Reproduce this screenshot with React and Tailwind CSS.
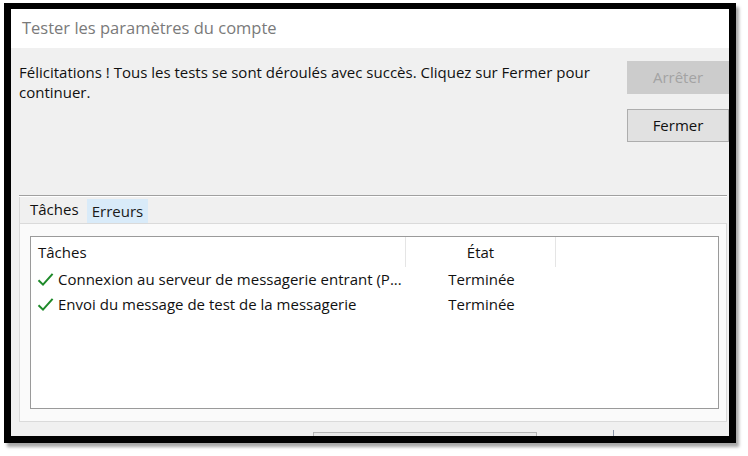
// Boîte de dialogue « Tester les paramètres du compte »

const font = { fontFamily: '"Open Sans", "Noto Sans", sans-serif' };

function Check() {
    return (
        <svg width="17" height="15" viewBox="0 0 17 15" className="shrink-0">
            <path d="M1.5 8.2 L6 12.6 L15.6 1.8" fill="none" stroke="#1e8a2a" strokeWidth="2" />
        </svg>
    );
}

const rows = [
    { label: 'Connexion au serveur de messagerie entrant (P...', state: 'Terminée' },
    { label: 'Envoi du message de test de la messagerie', state: 'Terminée' },
];

export default function App() {
    return (
        <div className="w-[748px] h-[456px] bg-white overflow-hidden" style={font}>
            {/* ── Cadre noir + ombre ───────────────────────── */}
            <div className="ml-[4px] mt-[3px] w-[732px] h-[440px] border-black border-x-[7px] border-t-[6px] border-b-[7px] shadow-[3px_4px_3px_rgba(0,0,0,0.35)] overflow-hidden flex flex-col">
                {/* ── Barre de titre ───────────────────────── */}
                <div className="h-[39px] shrink-0 bg-white flex items-center pl-[11px] text-[16.5px] text-[#7a7a7a]">
                    Tester les paramètres du compte
                </div>

                {/* ── Corps ────────────────────────────────── */}
                <div className="flex-1 bg-[#f0f0f0] flex flex-col">
                    <div className="h-[147px] shrink-0 flex">
                        <p className="pl-[8px] pt-[14px] text-[15px] leading-[20px] text-[#111] flex-1 pr-[20px]">
                            Félicitations ! Tous les tests se sont déroulés avec succès. Cliquez sur Fermer pour continuer.
                        </p>
                        <div className="w-[102px] shrink-0 pt-[13px] flex flex-col gap-[15px]">
                            <div className="h-[33px] bg-[#cccccc] flex items-center justify-center text-[15px] text-[#a3a3a3]">
                                Arrêter
                            </div>
                            <div className="h-[33px] bg-[#e1e1e1] border border-[#adadad] flex items-center justify-center text-[15px] text-[#111]">
                                Fermer
                            </div>
                        </div>
                    </div>

                    {/* séparateur */}
                    <div className="ml-[8px] mr-[2px] h-px bg-[#a0a0a0] shrink-0" />
                    <div className="ml-[8px] mr-[2px] h-px bg-white shrink-0" />

                    {/* ── Onglets ──────────────────────────── */}
                    <div className="h-[26px] shrink-0 flex items-end ml-[8px] text-[15px] text-[#111]">
                        <div className="h-[26px] w-[68px] flex items-center pl-[10px] pb-[1px] border-l border-[#d9d9d9]">Tâches</div>
                        <div className="h-[24px] w-[61px] bg-[#d9ebf9] flex items-center justify-center text-[#1a1a1a]">Erreurs</div>
                    </div>

                    {/* ── Panneau ──────────────────────────── */}
                    <div className="ml-[8px] mr-[2px] h-[199px] shrink-0 bg-[#fafafa] border border-[#dadada] pl-[10px] pr-[7px] pt-[12px] pb-[12px]">
                        <div className="h-full bg-white border border-[#9a9a9a] text-[15px] text-[#111]">
                            <div className="h-[30px] flex">
                                <div className="w-[375px] flex items-center pl-[7px] border-r border-[#e5e5e5]">Tâches</div>
                                <div className="w-[150px] flex items-center justify-center border-r border-[#e5e5e5]">État</div>
                            </div>
                            {rows.map((r) => (
                                <div key={r.label} className="h-[25px] flex items-center">
                                    <div className="w-[375px] flex items-center pl-[6px] gap-[4px] whitespace-nowrap">
                                        <Check />
                                        {r.label}
                                    </div>
                                    <div className="w-[151px] text-center">{r.state}</div>
                                </div>
                            ))}
                        </div>
                    </div>

                    {/* ── Bas (boutons coupés) ─────────────── */}
                    <div className="flex-1 flex items-end">
                        <div className="ml-[302px] w-[224px] h-[4px] border-t border-x border-[#b5b5b5] bg-[#e8e8e8]" />
                        <div className="ml-[76px] w-px h-[6px] bg-[#8a95a8]" />
                    </div>
                </div>
            </div>
        </div>
    );
}
